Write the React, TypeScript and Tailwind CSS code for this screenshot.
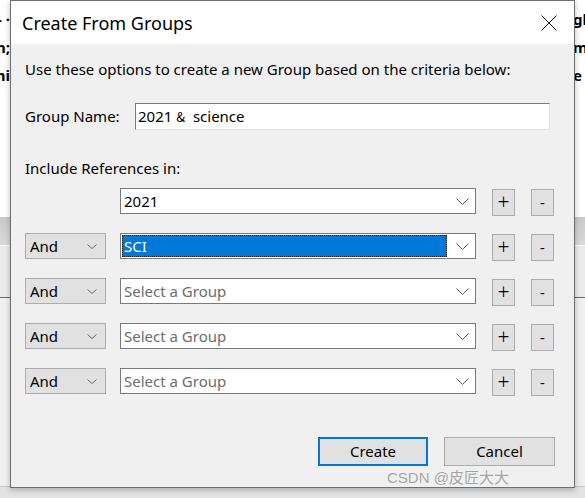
import React from "react";

const FONT = '"Noto Sans", "Noto Sans CJK SC", sans-serif';

function Chevron({ w = 12, h = 7, color = "#5a5a5a" }: { w?: number; h?: number; color?: string }) {
  return (
    <svg width={w} height={h} viewBox={`0 0 ${w} ${h}`} className="shrink-0">
      <polyline points={`0.5,0.5 ${w / 2},${h - 0.5} ${w - 0.5},0.5`} fill="none" stroke={color} strokeWidth="1" />
    </svg>
  );
}

function AndBox() {
  return (
    <div className="w-[81px] h-[26px] bg-[#e1e1e1] border border-[#adadad] flex items-center justify-between pl-[4px] pr-[8px] shrink-0">
      <span className="text-[15px] text-black leading-none">And</span>
      <Chevron w={10} h={5} color="#6a6a6a" />
    </div>
  );
}

function GroupBox({ value, selected, placeholder }: { value?: string; selected?: boolean; placeholder?: boolean }) {
  return (
    <div className="w-[356px] h-[26px] bg-white border border-[#7a7a7a] flex items-center pl-[1px] pr-[6px] shrink-0">
      {selected ? (
        <div className="w-[325px] h-[22px] bg-[#0078d7] border border-dotted border-[#222] flex items-center pl-[1px]">
          <span className="text-[15px] text-white leading-none">{value}</span>
        </div>
      ) : (
        <div className="w-[325px] h-[22px] flex items-center pl-[2px]">
          <span className={`text-[15px] leading-none ${placeholder ? "text-[#6d6d6d]" : "text-black"}`}>{value}</span>
        </div>
      )}
      <div className="flex-1 flex justify-end">
        <Chevron w={13} h={7} />
      </div>
    </div>
  );
}

function SmallBtn({ label, big }: { label: string; big?: boolean }) {
  return (
    <div className="w-[23px] h-[27px] mt-[1px] bg-[#e1e1e1] border border-[#adadad] flex items-center justify-center shrink-0">
      <span className={`${big ? "text-[21px] font-light" : "text-[15px]"} text-black leading-none`}>{label}</span>
    </div>
  );
}

function Row({ first, value, selected, placeholder }: { first?: boolean; value: string; selected?: boolean; placeholder?: boolean }) {
  return (
    <div className="flex items-start h-[28px]">
      {first ? <div className="w-[81px] shrink-0" /> : <AndBox />}
      <div className="ml-[14px]">
        <GroupBox value={value} selected={selected} placeholder={placeholder} />
      </div>
      <div className="ml-[16px]">
        <SmallBtn label="+" big />
      </div>
      <div className="ml-[16px]">
        <SmallBtn label="-" />
      </div>
    </div>
  );
}

export default function App() {
  return (
    <div className="relative w-[585px] h-[498px] overflow-hidden bg-[#f0f0f0]" style={{ fontFamily: FONT }}>
      {/* background application window */}
      <div className="flex flex-col h-full">
        <div className="h-[217px] bg-white flex justify-between text-[15px] font-bold text-black leading-[28px] pt-[5px]">
          <div className="w-[10px] overflow-hidden flex flex-col items-end">
            <span className="whitespace-nowrap">- ·</span>
            <span className="whitespace-nowrap">n;</span>
            <span className="whitespace-nowrap">hi</span>
          </div>
          <div className="w-[12px] overflow-hidden flex flex-col">
            <span className="whitespace-nowrap">gh</span>
            <span className="whitespace-nowrap">m</span>
            <span className="whitespace-nowrap">e</span>
          </div>
        </div>
        <div className="h-[28px] bg-gradient-to-b from-[#c9c9c9] to-[#d9d9d9]" />
        <div className="h-[53px] bg-[#ebebeb] border-t border-white border-b border-b-[#6e6e6e]" />
        <div className="flex-1 bg-[#f0f0f0]" />
        <div className="h-[12px] bg-[#e3e3e3] border-t border-[#c8c8c8]" />
      </div>

      {/* dialog */}
      <div className="absolute left-[10px] top-0 w-[565px] h-[488px] border border-[#6e6e6e] bg-[#f0f0f0] flex flex-col shadow-[0_2px_6px_rgba(0,0,0,0.25)]">
        <div className="h-[43px] bg-white flex items-center justify-between pl-[11px] pr-[17px] shrink-0">
          <span className="text-[18px] text-black leading-none">Create From Groups</span>
          <svg width="16" height="16" viewBox="0 0 16 16">
            <line x1="0.5" y1="0.5" x2="15.5" y2="15.5" stroke="#111" strokeWidth="1" />
            <line x1="15.5" y1="0.5" x2="0.5" y2="15.5" stroke="#111" strokeWidth="1" />
          </svg>
        </div>

        <div className="flex-1 flex flex-col pl-[14px] pt-[15px] text-[15px] text-black">
          <div className="h-[20px] flex items-center leading-none">
            Use these options to create a new Group based on the criteria below:
          </div>

          <div className="mt-[24px] flex items-center h-[27px]">
            <span className="w-[110px] leading-none">Group Name:</span>
            <div className="w-[415px] h-[27px] bg-white border border-[#e3e3e3] border-t-[#7a7a7a] border-l-[#7a7a7a] flex items-center pl-[2px]">
              <span className="leading-none whitespace-pre">
                2021 <span className="text-[13px]" style={{ fontFamily: '"Noto Sans CJK SC", sans-serif' }}>&amp;</span>  science
              </span>
            </div>
          </div>

          <div className="mt-[28px] h-[20px] flex items-center leading-none">Include References in:</div>

          <div className="mt-[10px] flex flex-col gap-[17px]">
            <Row first value="2021" />
            <Row value="SCI" selected />
            <Row value="Select a Group" placeholder />
            <Row value="Select a Group" placeholder />
            <Row value="Select a Group" placeholder />
          </div>

          <div className="mt-[41px] flex pl-[293px] gap-[16px]">
            <div className="w-[110px] h-[29px] bg-[#e1e1e1] border-2 border-[#0078d7] flex items-center justify-center">
              <span className="leading-none">Create</span>
            </div>
            <div className="w-[111px] h-[29px] bg-[#e1e1e1] border border-[#adadad] flex items-center justify-center">
              <span className="leading-none">Cancel</span>
            </div>
          </div>
        </div>
      </div>

      {/* watermark */}
      <div
        className="absolute left-[387px] top-[470px] text-[15px] leading-none text-[#a3a3a3] whitespace-nowrap [text-shadow:0_0_2px_#fff]"
        style={{ fontFamily: '"Liberation Sans", "Noto Sans CJK SC", sans-serif' }}
      >
        CSDN @皮匠大大
      </div>
    </div>
  );
}
